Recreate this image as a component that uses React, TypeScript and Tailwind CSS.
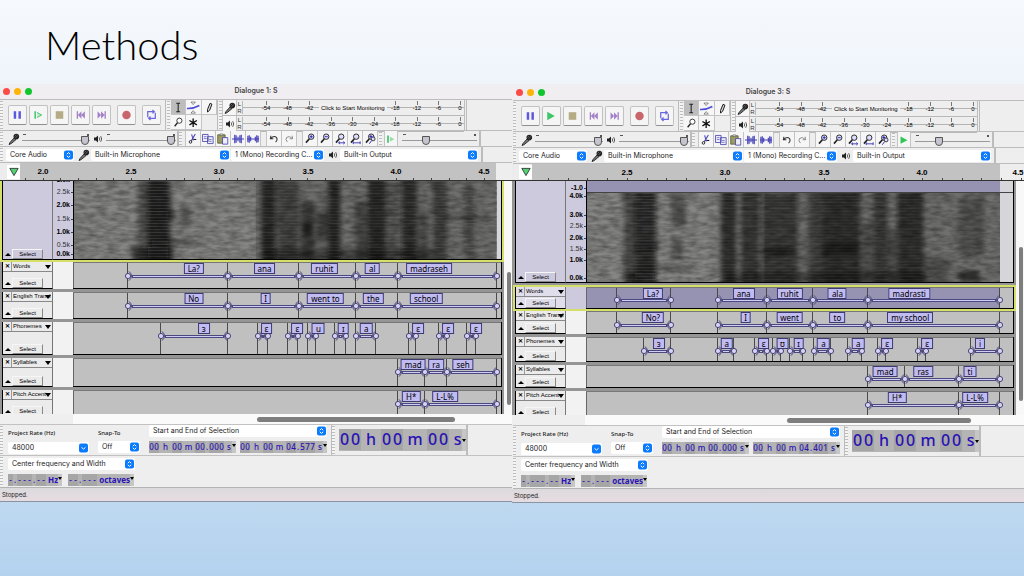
import React from "react";
import clsx from "clsx";

type Label = { from: number; to: number; text: string; at: number };

interface LabelTrack {
  name: string;
  height: string;
  labels: Label[];
  selected?: boolean;
  clipped?: boolean;
}

interface Bar {
  x: number;
  w: number;
  y: number;
  h: number;
  o: number;
}

interface Project {
  id: string;
  title: string;
  second: boolean;
  ruler: { text: string; x: number }[];
  tickStart: number;
  tickStep: number;
  laneStart: number;
  laneWidth: number;
  selectionEnd: string;
  spectroHeight: string;
  scale: { text: string; y: number; bold?: boolean }[];
  bars: Bar[];
  tracks: LabelTrack[];
}

const label = (from: number, to: number, text: string, at: number): Label => ({
  from,
  to,
  text,
  at,
});

const projects: Project[] = [
  {
    id: "d1",
    title: "Dialogue 1: S",
    second: false,
    ruler: [
      { text: "2.0", x: 43 },
      { text: "2.5", x: 131 },
      { text: "3.0", x: 219 },
      { text: "3.5", x: 308 },
      { text: "4.0", x: 396 },
      { text: "4.5", x: 484 },
    ],
    tickStart: 25,
    tickStep: 17.65,
    laneStart: 73,
    laneWidth: 428,
    selectionEnd: "00 h 00 m 04.577 s",
    spectroHeight: "h-[81px]",
    scale: [
      { text: "3.0k", y: -1, bold: true },
      { text: "2.5k", y: 11 },
      { text: "2.0k", y: 24, bold: true },
      { text: "1.5k", y: 38 },
      { text: "1.0k", y: 51, bold: true },
      { text: "0.5k", y: 64 },
      { text: "0.0k", y: 73, bold: true },
    ],
    bars: [
      { x: 64, w: 34, y: 0, h: 80, o: 0.4 },
      { x: 74, w: 21, y: -5, h: 88, o: 0.6 },
      { x: 74, w: 28, y: 30, h: 8, o: 0.5 },
      { x: 58, w: 42, y: 66, h: 16, o: 0.5 },
      { x: 78, w: 44, y: 59, h: 4, o: 0.5 },
      { x: 108, w: 9, y: 24, h: 22, o: 0.35 },
      { x: 188, w: 14, y: -5, h: 90, o: 0.65 },
      { x: 204, w: 22, y: 0, h: 80, o: 0.4 },
      { x: 228, w: 13, y: 20, h: 60, o: 0.45 },
      { x: 229, w: 10, y: 42, h: 12, o: 0.5 },
      { x: 255, w: 12, y: -5, h: 90, o: 0.65 },
      { x: 243, w: 12, y: 30, h: 30, o: 0.4 },
      { x: 282, w: 12, y: 20, h: 60, o: 0.35 },
      { x: 295, w: 17, y: -5, h: 88, o: 0.65 },
      { x: 312, w: 15, y: 0, h: 80, o: 0.25 },
      { x: 329, w: 15, y: -5, h: 88, o: 0.6 },
      { x: 346, w: 9, y: 30, h: 50, o: 0.3 },
      { x: 360, w: 14, y: -5, h: 88, o: 0.45 },
      { x: 374, w: 42, y: 34, h: 5, o: 0.3 },
      { x: 392, w: 10, y: 4, h: 76, o: 0.3 },
      { x: 190, w: 170, y: 68, h: 12, o: 0.35 },
    ],
    tracks: [
      {
        name: "Words",
        height: "h-[30px]",
        labels: [
          label(127, 227, "La?", 193),
          label(227, 299, "ana", 264),
          label(299, 356, "ruhit", 324),
          label(356, 398, "al", 372),
          label(398, 497, "madraseh", 429),
        ],
      },
      {
        name: "English Transl",
        height: "h-[30px]",
        labels: [
          label(127, 227, "No", 193),
          label(227, 299, "I", 265),
          label(299, 356, "went to", 325),
          label(356, 398, "the", 373),
          label(398, 497, "school", 426),
        ],
      },
      {
        name: "Phonemes",
        height: "h-9",
        labels: [
          label(160, 227, "ɜ", 203),
          label(257, 267, "ɛ", 266),
          label(288, 298, "ɛ", 297),
          label(308, 316, "u", 318),
          label(335, 346, "ɪ", 343),
          label(356, 376, "a", 366),
          label(409, 416, "ɛ", 418),
          label(439, 447, "ɛ", 448),
          label(467, 476, "ɛ", 476),
        ],
      },
      {
        name: "Syllables",
        height: "h-8",
        labels: [
          label(398, 425, "mad", 413),
          label(425, 447, "ra", 436),
          label(447, 497, "seh", 463),
        ],
      },
      {
        name: "Pitch Accent",
        height: "h-6",
        clipped: true,
        labels: [label(398, 425, "H*", 411), label(425, 497, "L-L%", 445)],
      },
    ],
  },
  {
    id: "d3",
    title: "Dialogue 3: S",
    second: true,
    ruler: [
      { text: "2.5", x: 115 },
      { text: "3.0", x: 213 },
      { text: "3.5", x: 312 },
      { text: "4.0", x: 410 },
      { text: "4.5", x: 506 },
    ],
    tickStart: 36,
    tickStep: 19.7,
    laneStart: 74,
    laneWidth: 427,
    selectionEnd: "00 h 00 m 04.401 s",
    spectroHeight: "h-[104px]",
    scale: [
      { text: "-1.0", y: 7, bold: true },
      { text: "4.0k", y: 15, bold: true },
      { text: "3.0k", y: 34, bold: true },
      { text: "2.5k", y: 45 },
      { text: "2.0k", y: 57, bold: true },
      { text: "1.5k", y: 68 },
      { text: "1.0k", y: 79, bold: true },
      { text: "0.0k", y: 97, bold: true },
    ],
    bars: [
      { x: 37, w: 32, y: -4, h: 100, o: 0.45 },
      { x: 48, w: 21, y: -4, h: 100, o: 0.45 },
      { x: 50, w: 22, y: 50, h: 8, o: 0.5 },
      { x: 38, w: 30, y: 80, h: 10, o: 0.5 },
      { x: 50, w: 54, y: 74, h: 4, o: 0.35 },
      { x: 84, w: 15, y: 0, h: 34, o: 0.35 },
      { x: 84, w: 12, y: 44, h: 24, o: 0.3 },
      { x: 134, w: 16, y: -4, h: 100, o: 0.65 },
      { x: 154, w: 19, y: -4, h: 100, o: 0.6 },
      { x: 175, w: 36, y: 0, h: 94, o: 0.5 },
      { x: 175, w: 34, y: 54, h: 10, o: 0.4 },
      { x: 222, w: 14, y: -4, h: 100, o: 0.45 },
      { x: 236, w: 38, y: -4, h: 100, o: 0.6 },
      { x: 236, w: 38, y: 50, h: 12, o: 0.4 },
      { x: 276, w: 10, y: 30, h: 60, o: 0.3 },
      { x: 287, w: 14, y: -4, h: 100, o: 0.5 },
      { x: 301, w: 9, y: 36, h: 60, o: 0.3 },
      { x: 311, w: 26, y: -4, h: 100, o: 0.6 },
      { x: 337, w: 26, y: 66, h: 30, o: 0.25 },
      { x: 373, w: 24, y: 4, h: 60, o: 0.25 },
      { x: 373, w: 20, y: 79, h: 10, o: 0.6 },
      { x: 140, w: 200, y: 80, h: 10, o: 0.35 },
    ],
    tracks: [
      {
        name: "Words",
        height: "h-[26px]",
        selected: true,
        labels: [
          label(104, 158, "La?", 140),
          label(205, 254, "ana", 231),
          label(254, 301, "ruhit", 277),
          label(301, 356, "ala", 325),
          label(356, 488, "madrasti", 397),
        ],
      },
      {
        name: "English Transl",
        height: "h-[26px]",
        labels: [
          label(104, 158, "No?", 140),
          label(205, 254, "I", 233),
          label(254, 301, "went", 277),
          label(301, 356, "to", 325),
          label(356, 488, "my school", 398),
        ],
      },
      {
        name: "Phonemes",
        height: "h-7",
        labels: [
          label(131, 158, "ɜ", 146),
          label(205, 221, "a", 214),
          label(242, 254, "ɛ", 251),
          label(260, 268, "ʊ", 270),
          label(277, 291, "ɪ", 286),
          label(302, 319, "a", 311),
          label(336, 350, "a", 346),
          label(366, 374, "ɛ", 375),
          label(406, 414, "ɛ", 415),
          label(459, 488, "i", 468),
        ],
      },
      {
        name: "Syllables",
        height: "h-[26px]",
        labels: [
          label(356, 393, "mad", 373),
          label(393, 447, "ras", 411),
          label(447, 488, "ti", 458),
        ],
      },
      {
        name: "Pitch Accent",
        height: "h-6",
        clipped: true,
        labels: [label(356, 447, "H*", 385), label(447, 488, "L-L%", 463)],
      },
    ],
  },
];

const Grip = () => (
  <div className="my-px w-[3px] shrink-0 self-stretch bg-[repeating-linear-gradient(#bdbdbd_0_1px,#f4f4f4_1px_3px)]" />
);

const MicIcon = () => (
  <svg viewBox="0 0 12 12" className="h-3 w-3 shrink-0">
    <path d="M1 11.5 2 9.5 6.2 4.8 8 6.6 3.2 10.6Z" fill="#777" stroke="#111" strokeWidth=".8" />
    <circle cx="8.3" cy="3.6" r="2.8" fill="#222" />
    <path d="M6.5 3.5 8.3 1.8M7.3 5 9.8 2.6" stroke="#999" strokeWidth=".5" />
  </svg>
);

const SpeakerIcon = () => (
  <svg viewBox="0 0 10 10" className="h-[10px] w-[10px] shrink-0">
    <path d="M1 3.6h1.8L5 1.6v6.8L2.8 6.4H1Z" fill="#222" />
    <path d="M6.2 3.4q1.1 1.6 0 3.2M7.7 2.2q2 2.8 0 5.6" fill="none" stroke="#333" strokeWidth=".8" />
  </svg>
);

const UpDown = ({ single }: { single?: boolean }) => (
  <span className="pointer-events-none absolute top-1/2 right-px flex h-[9px] w-[9px] -translate-y-1/2 items-center justify-center rounded-xs bg-[#0a7bff]">
    <svg viewBox="0 0 9 9" className="h-[9px] w-[9px]" fill="none" stroke="#fff" strokeWidth="1">
      {single ? <path d="M2.5 3.8 4.5 5.6 6.5 3.8" /> : <path d="M2.8 3.7 4.5 2.1 6.2 3.7M2.8 5.3 4.5 6.9 6.2 5.3" />}
    </svg>
  </span>
);

interface PickerProps {
  name: string;
  value: string;
  className: string;
  single?: boolean;
}

const Picker = ({ name, value, className, single }: PickerProps) => (
  <div className={clsx("relative h-3 shrink-0", className)}>
    <select
      aria-label={name}
      className="block h-3 w-full appearance-none truncate rounded-xs bg-white pr-[10px] pl-1 text-[7px] leading-3 text-[#222]"
    >
      <option>{value}</option>
    </select>
    <UpDown single={single} />
  </div>
);

const Slider = ({ name, value, className }: { name: string; value: number; className: string }) => (
  <div className={clsx("relative flex h-full shrink-0 items-center", className)}>
    <span className="absolute top-[3px] left-px h-px w-[3px] bg-[#555]" />
    <span className="absolute top-[3px] right-px h-[2px] w-[2px] bg-[#555]" />
    <input
      type="range"
      aria-label={name}
      defaultValue={value}
      className="mt-[3px] h-[9px] w-full appearance-none bg-[linear-gradient(#9a9a9a,#9a9a9a)] bg-[length:100%_1px] bg-center bg-no-repeat [&::-webkit-slider-thumb]:h-[9px] [&::-webkit-slider-thumb]:w-2 [&::-webkit-slider-thumb]:appearance-none [&::-webkit-slider-thumb]:rounded-t-xs [&::-webkit-slider-thumb]:rounded-b-full [&::-webkit-slider-thumb]:border [&::-webkit-slider-thumb]:border-[#555] [&::-webkit-slider-thumb]:bg-[#c5c5d0]"
    />
  </div>
);

const transport = [
  { name: "Pause", icon: <path d="M5 5h2.6v8H5zM10 5h2.6v8H10z" fill="#5a57e0" /> },
  { name: "Play", icon: <path d="M4.5 4.5 12.5 9l-8 4.5Z" fill="#3fc668" /> },
  { name: "Stop", icon: <path d="M5 5h8v8H5z" fill="#b5ab84" /> },
  {
    name: "Skip to Start",
    icon: <path d="M5 5h1.4v8H5zM10 5v8L6.2 9ZM13.6 5v8L9.8 9Z" fill="#a482c8" />,
  },
  {
    name: "Skip to End",
    icon: <path d="M12.2 5h1.4v8h-1.4zM4.8 5v8L8.6 9ZM8.5 5v8l3.8-4Z" fill="#a482c8" />,
  },
];

const TransportButton = ({ name, children }: { name: string; children: React.ReactNode }) => (
  <button
    aria-label={name}
    className="flex h-5 w-[19px] items-center justify-center rounded-xs border border-[#c2c2c2] border-b-[#8f8f8f] bg-[#f5f5f5]"
  >
    <svg viewBox="0 0 18 18" className="h-[18px] w-[18px]">
      {children}
    </svg>
  </button>
);

const tools = [
  { name: "Selection", icon: <path d="M5.5 3h4M5.5 12h4M7.5 3v9" stroke="#222" strokeWidth="1.1" /> },
  {
    name: "Envelope",
    icon: (
      <>
        <path d="M5.2 1.8h4.6L7.5 4.4ZM5.2 13.4h4.6L7.5 10.8Z" fill="#fff" stroke="#555" strokeWidth=".7" />
        <path d="M1 8.5Q8 8.8 14 5.4" stroke="#4d4fd8" strokeWidth="1.6" fill="none" />
      </>
    ),
  },
  {
    name: "Draw",
    icon: <path d="M5.8 9.5 8.4 3.2 10.4 4 8 10.4 5.8 12.2Z" fill="#ddd" stroke="#111" strokeWidth="1" />,
  },
  {
    name: "Zoom",
    icon: (
      <>
        <circle cx="8.8" cy="5.6" r="2.7" fill="#fff" stroke="#222" strokeWidth=".9" />
        <path d="M6.8 7.8 3.8 11.4" stroke="#222" strokeWidth="1.4" />
      </>
    ),
  },
  {
    name: "Multi",
    icon: <path d="M7.5 3.2v9M3.6 5.4l7.8 4.6M3.6 10l7.8-4.6" stroke="#111" strokeWidth="1.4" />,
  },
];

const lens = (
  <>
    <circle cx="8.8" cy="5" r="2.9" fill="#dcdcff" stroke="#222" strokeWidth="1" />
    <path d="M6.8 7.2 3.2 11.4" stroke="#222" strokeWidth="1.7" />
  </>
);

const editGroups = [
  [
    {
      name: "Cut",
      icon: (
        <>
          <path d="M6 2.6 8 9M10 2.2 5.6 9.5" stroke="#4440b8" strokeWidth="1.1" />
          <circle cx="4.8" cy="10.6" r="1.4" fill="none" stroke="#222" />
          <path d="M8 8h3" stroke="#222" strokeWidth="1.2" />
        </>
      ),
    },
    {
      name: "Copy",
      icon: (
        <>
          <path d="M1.6 2.6h6v7.6h-6zM7 5h6v7.4H7z" fill="#eeeeff" stroke="#4a48a8" strokeWidth=".9" />
          <path d="M3 5h3M3 7h3M8.4 8h3M8.4 10h3" stroke="#4a48a8" strokeWidth=".7" />
        </>
      ),
    },
    {
      name: "Paste",
      icon: (
        <>
          <path d="M1.8 3h8v9h-8z" fill="#9a9a62" stroke="#55552c" strokeWidth=".8" />
          <path d="M4.3 2h3v1.8h-3z" fill="#ddd" stroke="#444" strokeWidth=".5" />
          <path d="M7 6h5.6v7H7z" fill="#eeeeff" stroke="#4a48a8" strokeWidth=".9" />
        </>
      ),
    },
    {
      name: "Trim",
      icon: <path d="M1 7.5h13M4 3v9M5.5 3.6v7.8M7.5 5v5M9.5 3.6v7.8M11 3v9" stroke="#4440b8" strokeWidth="1.2" />,
    },
    {
      name: "Silence",
      icon: (
        <path d="M1 7.5h13M2 4v7M3.5 3.6v8M5 5v5M10 5v5M11.5 3.6v8M13 4v7" stroke="#4440b8" strokeWidth="1.2" />
      ),
    },
  ],
  [
    {
      name: "Undo",
      icon: (
        <path d="M4.2 4 3.6 7.2 6.8 7.2M3.8 7Q7.4 3.4 10 5.8q1.9 2.4-.8 5" fill="none" stroke="#333" strokeWidth="1.1" />
      ),
    },
    {
      name: "Redo",
      icon: (
        <path d="M10.8 4 11.4 7.2 8.2 7.2M11.2 7Q7.6 3.4 5 5.8q-1.9 2.4.8 5" fill="none" stroke="#888" strokeWidth="1" />
      ),
    },
  ],
  [
    {
      name: "Zoom In",
      icon: (
        <>
          {lens}
          <path d="M8.8 3.4v3.2M7.2 5h3.2" stroke="#2b27b0" strokeWidth="1" />
        </>
      ),
    },
    {
      name: "Zoom Out",
      icon: (
        <>
          {lens}
          <path d="M7.2 5h3.2" stroke="#2b27b0" strokeWidth="1" />
        </>
      ),
    },
    {
      name: "Fit Selection",
      icon: (
        <>
          {lens}
          <path d="M6 11.6h6.6M7.6 10.2 6 11.6 7.6 13M11 10.2l1.6 1.4L11 13" stroke="#2b27b0" strokeWidth=".9" fill="none" />
        </>
      ),
    },
    {
      name: "Fit Project",
      icon: (
        <>
          {lens}
          <path d="M5.6 11.6h7.4M5.6 10v3M13 10v3" stroke="#2b27b0" strokeWidth=".9" />
        </>
      ),
    },
    {
      name: "Zoom Toggle",
      icon: (
        <>
          {lens}
          <circle cx="10.8" cy="7.4" r="2.1" fill="#dcdcff" stroke="#222" strokeWidth=".9" />
          <path d="M9.2 9.2 6.8 12.6M8.4 3.2v3.2M6.8 4.8h3.2" stroke="#2b27b0" strokeWidth="1" />
        </>
      ),
    },
  ],
];

const meterMarks = ["-54", "-48", "-42", "-36", "-30", "-24", "-18", "-12", "-6", "0"];

const Meter = ({ kind }: { kind: "record" | "play" }) => (
  <div className="flex h-4 border-b border-[#b9b9b9]">
    <button
      aria-label={kind === "record" ? "Record Meter" : "Playback Meter"}
      className="flex w-[15px] items-center justify-center border-x border-[#c4c4c4] bg-[#f6f6f6]"
    >
      {kind === "record" ? <MicIcon /> : <SpeakerIcon />}
    </button>
    <div className="flex w-[5px] flex-col items-center justify-center text-[6px] leading-[7px] text-[#333]">
      <span>L</span>
      <span>R</span>
    </div>
    <div className="relative my-px flex w-[222px] items-center justify-between border-l border-[#b9b9b9] bg-[linear-gradient(#b4b4b4,#b4b4b4)] bg-[length:100%_1px] bg-center bg-no-repeat pl-[19px] text-[6px] leading-[14px] text-black">
      {meterMarks.map((mark, i) => (
        <span key={mark} className="relative flex w-2 justify-center">
          <span className="absolute top-0 left-1/2 h-[4px] w-px bg-[#777]" />
          {kind === "record" && i > 2 && i < 6 ? "" : mark}
        </span>
      ))}
      {kind === "record" && (
        <button className="absolute inset-y-0 left-[76px] my-[2px] bg-[#f0f0f0] px-[2px] leading-[10px] whitespace-nowrap">
          Click to Start Monitoring
        </button>
      )}
    </div>
  </div>
);

const Toolbars = ({ project }: { project: Project }) => (
  <div className={clsx("bg-[#eeeeee] font-['Liberation_Sans',sans-serif]", project.second && "pl-px")}>
    <div className="flex h-8 border-t border-b border-[#bcbcbc]">
      <Grip />
      <div className="ml-[5px] flex items-center gap-[2px]">
        {transport.map(({ name, icon }) => (
          <TransportButton key={name} name={name}>
            {name === "Play" && !project.second ? (
              <>
                <path d="M5.5 5v8" stroke="#3fc668" strokeWidth="1.6" />
                <path d="M7.5 6.4 12.4 9l-4.9 2.6" fill="#bfeacb" stroke="#3fc668" />
              </>
            ) : (
              icon
            )}
          </TransportButton>
        ))}
        <div className="ml-1 flex gap-[6px]">
          <TransportButton name="Record">
            <circle cx="9" cy="9" r="4.5" fill="#c9666c" />
          </TransportButton>
          <TransportButton name="Loop">
            <path
              d="M5 11.5v-6h6.5M13 6.5v6H6.5M10 3.6l2 1.9-2 1.8M8 10.6l-2 1.9 2 1.8"
              fill="none"
              stroke="#6a67e0"
              strokeWidth="1.3"
            />
          </TransportButton>
        </div>
      </div>
      <div className="mr-px ml-1 w-px bg-[#bcbcbc]" />
      <Grip />
      <div className="ml-px grid w-[46px] grid-cols-3 grid-rows-2">
        {tools.map(({ name, icon }, i) => (
          <button
            key={name}
            aria-label={name}
            className={clsx(
              "flex items-center justify-center border-r border-b border-[#c4c4c4]",
              i === 0 ? "bg-[#bdbdbd]" : "bg-[#f6f6f6]"
            )}
          >
            <svg viewBox="0 0 15 15" className="h-[15px] w-[15px]">
              {icon}
            </svg>
          </button>
        ))}
      </div>
      <div className="mr-px w-px bg-[#bcbcbc]" />
      <Grip />
      <div>
        <Meter kind="record" />
        <Meter kind="play" />
      </div>
      <div className="w-[3px] border-x border-[#bcbcbc]" />
    </div>

    <div className="flex h-4 items-center border-b border-[#bcbcbc]">
      <Grip />
      <div className="ml-[5px] flex h-full items-center">
        <MicIcon />
      </div>
      <Slider name="Recording Volume" value={99} className="ml-[2px] w-[68px]" />
      <div className="ml-[3px] flex h-full items-center">
        <SpeakerIcon />
      </div>
      <Slider name="Playback Volume" value={99} className="ml-[3px] w-[70px]" />
      <div className="ml-px w-[2px] self-stretch border-x border-[#bcbcbc]" />
      <Grip />
      <div className="ml-[3px] flex gap-[5px]">
        {editGroups.map((group, i) => (
          <div key={i} className="flex border-l border-[#c4c4c4]">
            {group.map(({ name, icon }) => (
              <button
                key={name}
                aria-label={name}
                className="flex h-[15px] w-[15px] items-center justify-center border-r border-[#c4c4c4] bg-[#f6f6f6]"
              >
                <svg viewBox="0 0 15 15" className="h-[14px] w-[14px]">
                  {icon}
                </svg>
              </button>
            ))}
          </div>
        ))}
      </div>
      <div className="ml-px flex h-full items-center gap-[2px]">
        <Grip />
        <button
          aria-label="Play at Speed"
          className="flex h-[15px] w-[14px] items-center justify-center border-x border-[#c4c4c4] bg-[#f6f6f6]"
        >
          <svg viewBox="0 0 14 14" className="h-[14px] w-[14px]">
            {project.second ? (
              <path d="M3 3 11 7.2 3 11.4Z" fill="#2fc656" />
            ) : (
              <>
                <path d="M3.5 3v8.4" stroke="#3fc668" strokeWidth="2" />
                <path d="M6 4.4 10.8 7.2 6 10Z" fill="#8fdca5" />
              </>
            )}
          </svg>
        </button>
      </div>
      <Slider name="Playback Speed" value={30} className="ml-1 w-[75px]" />
      <div className="ml-[2px] w-[2px] self-stretch border-x border-[#bcbcbc]" />
    </div>

    <div className="flex h-4 items-center border-b border-[#bcbcbc] font-['Inter',sans-serif]">
      <Grip />
      <Picker name="Audio Host" value="Core Audio" className="ml-[3px] w-[68px]" />
      <div className="ml-1">
        <MicIcon />
      </div>
      <Picker name="Recording Device" value="Built-in Microphone" className="ml-px w-[139px]" />
      <Picker name="Recording Channels" value="1 (Mono) Recording C..." className="ml-px w-[93px]" />
      <div className="ml-1">
        <SpeakerIcon />
      </div>
      <Picker name="Playback Device" value="Built-in Output" className="ml-[2px] w-[138px]" />
      <div className="ml-[3px] w-[2px] self-stretch border-x border-[#bcbcbc]" />
    </div>
  </div>
);

const Ruler = ({ project }: { project: Project }) => (
  <div className="relative flex flex-1 overflow-hidden border-b border-[#333] bg-[#c2c2c2] font-['Liberation_Sans',sans-serif]">
    <div className="flex w-5 shrink-0 items-center bg-[#ececec]">
      <button
        aria-label="Pinned Play Head"
        className="ml-[7px] flex h-[14px] w-[13px] items-center justify-center bg-white"
      >
        <svg viewBox="0 0 12 12" className="h-3 w-3">
          <path d="M1.8 2.4h8.4L6 9.6Z" fill="#52d273" stroke="#222" strokeWidth=".8" />
        </svg>
      </button>
    </div>
    {project.ruler.map(({ text, x }) => (
      <span
        key={text}
        className="absolute top-1 z-10 w-5 -translate-x-1/2 text-center text-[8px] leading-[9px] font-bold text-black"
        style={{ left: `${(x / 512) * 100}%` }}
      >
        {text}
      </span>
    ))}
    <div className={clsx("absolute inset-y-0 right-0 bg-[#eeeeee]", project.second ? "w-6" : "w-4")} />
    {Array.from({ length: 27 }, (_, i) => (
      <span
        key={i}
        className="absolute bottom-0 h-[2px] w-px bg-[#444]"
        style={{ left: `${((project.tickStart + i * project.tickStep) / 512) * 100}%` }}
      />
    ))}
  </div>
);

const Spectrogram = ({ id, bars, width, height }: { id: string; bars: Bar[]; width: number; height: number }) => (
  <svg
    viewBox={`0 0 ${width} ${height}`}
    preserveAspectRatio="none"
    className="block h-full w-full"
    role="img"
    aria-label="Spectrogram"
  >
    <defs>
      <filter id={`${id}-soft`} x="-20%" y="-20%" width="140%" height="140%">
        <feGaussianBlur stdDeviation="2.6 2" />
      </filter>
      <filter id={`${id}-noise`} x="0" y="0" width="100%" height="100%">
        <feTurbulence type="fractalNoise" baseFrequency="0.09 0.28" numOctaves="2" seed="4" />
        <feColorMatrix values="0 0 0 0 0  0 0 0 0 0  0 0 0 0 0  1.6 0 0 0 -0.45" />
        <feGaussianBlur stdDeviation="0.5 0.3" />
      </filter>
      <pattern id={`${id}-lines`} width="8" height="3" patternUnits="userSpaceOnUse">
        <rect width="8" height="1" fill="#aaa" opacity=".1" />
      </pattern>
    </defs>
    <rect width={width} height={height} fill="#868684" />
    <rect x={width * 0.43} width={width * 0.57} height={height} fill="#000" opacity=".16" />
    <g filter={`url(#${id}-soft)`}>
      {bars.map((bar, i) => (
        <rect key={i} x={bar.x} y={bar.y} width={bar.w} height={bar.h} fill="#080808" opacity={bar.o} />
      ))}
    </g>
    {bars
      .filter((bar) => bar.h > 70)
      .map((bar, i) => (
        <rect key={i} x={bar.x} y="0" width={bar.w} height={height} fill={`url(#${id}-lines)`} />
      ))}
    <rect width={width} height={height} filter={`url(#${id}-noise)`} opacity=".36" />
  </svg>
);

const Handle = ({ start, end }: { start: boolean; end: boolean }) => (
  <svg viewBox="0 0 12 12" className="h-3 w-3" fill="none" stroke="#3b3866" strokeWidth=".9">
    {start && <path d="M7 1.4Q12 6 7 10.6" fill="#c9c6ec" />}
    {end && <path d="M5 1.4Q0 6 5 10.6" fill="#c9c6ec" />}
    <circle cx="6" cy="6" r="2.6" fill="#d5d2f5" />
  </svg>
);

const Lane = ({ project, track }: { project: Project; track: LabelTrack }) => {
  const pos = (x: number) => `${((x - project.laneStart) / project.laneWidth) * 100}%`;
  const edges = [...new Set(track.labels.flatMap((l) => [l.from, l.to]))];

  return (
    <div className="relative flex-1 overflow-hidden border-l border-[#666] bg-[#c0c0c0] font-['Noto_Sans','DejaVu_Sans',sans-serif]">
      {track.selected && <div className="absolute inset-y-0 left-0 w-[97%] bg-[#9592b2]" />}
      {edges.map((x) => (
        <span
          key={x}
          className="absolute inset-y-0 w-px -translate-x-px bg-[#4a4a4a]"
          style={{ left: pos(x) }}
        />
      ))}
      {track.labels.map((l) => (
        <span
          key={l.from}
          className={clsx(
            "absolute h-[3px] border border-[#4b4880] bg-[#d0cdf4]",
            track.selected ? "top-[11px]" : "top-3"
          )}
          style={{ left: `calc(${pos(l.from)} + 4px)`, right: `calc(100% - ${pos(l.to)} + 4px)` }}
        />
      ))}
      {edges.map((x) => (
        <span
          key={x}
          className={clsx("absolute -translate-x-1/2", track.selected ? "top-[6px]" : "top-[7px]")}
          style={{ left: pos(x) }}
        >
          <Handle start={track.labels.some((l) => l.from === x)} end={track.labels.some((l) => l.to === x)} />
        </span>
      ))}
      {track.labels.map((l) => (
        <span
          key={l.at}
          className="absolute top-0 flex h-[11px] -translate-x-1/2 items-center border border-[#3d3a70] bg-[#c0bbf0] px-[3px] text-[8px] leading-[9px] whitespace-nowrap text-black"
          style={{ left: pos(l.at) }}
        >
          {l.text}
        </span>
      ))}
    </div>
  );
};

const SelectButton = () => (
  <div className="flex h-[10px] shrink-0 items-stretch">
    <button aria-label="Collapse" className="flex w-[9px] items-center justify-center">
      <span className="border-x-[3px] border-b-[3px] border-x-transparent border-b-black" />
    </button>
    <button className="mr-[9px] flex-1 border border-[#f6f6f6] border-r-[#888] border-b-[#888] text-[6px] leading-[8px]">
      Select
    </button>
  </div>
);

const TrackRow = ({ project, track }: { project: Project; track: LabelTrack }) => (
  <div
    className={clsx(
      "overflow-hidden",
      track.height,
      track.selected ? "border-2 border-[#d5e06a]" : "border-x-2 border-[#959595]",
      !track.selected && !track.clipped && "border-b-[3px]"
    )}
  >
    <div className={clsx("flex", track.clipped ? "h-[27px]" : "h-full")}>
      <div
        className={clsx(
          "flex w-[51px] shrink-0 flex-col justify-between border-x border-b border-b-black border-l-black border-r-[#777]",
          track.selected ? "bg-[#e0deea]" : "bg-[#ebebeb]"
        )}
      >
        <div className="flex h-[10px] items-center border-b border-[#888] text-[6px] leading-[9px]">
          <button aria-label={`Close ${track.name}`} className="w-[9px] shrink-0 border-r border-[#999] font-bold">
            ✕
          </button>
          <button className="relative flex flex-1 items-center pl-px whitespace-nowrap">
            {track.name}
            <span className="absolute right-px border-x-[3px] border-t-[4px] border-x-transparent border-t-black" />
          </button>
        </div>
        <SelectButton />
      </div>
      <div className={clsx("w-5 shrink-0", track.selected ? "bg-[#cdcade]" : "bg-[#f2f2f2]")} />
      <div className="flex min-w-0 flex-1 border-t border-b border-t-[#777] border-b-black">
        <Lane project={project} track={track} />
      </div>
      <div className="w-px bg-black" />
    </div>
  </div>
);

const AudioTrack = ({ project }: { project: Project }) => (
  <div
    className={clsx(
      "flex border-x-2 border-b-2",
      project.spectroHeight,
      project.second ? "border-[#959595]" : "border-[#d5e06a]"
    )}
  >
    <div className="flex w-[51px] shrink-0 flex-col justify-end border-x border-b border-b-black border-l-black border-r-[#777] bg-[#cdcade]">
      <SelectButton />
    </div>
    <div className="relative w-5 shrink-0 overflow-hidden border-b border-black bg-[#cdcade]">
      {project.scale.map(({ text, y, bold }) => (
        <span
          key={text}
          className={clsx(
            "absolute right-[3px] -translate-y-1/2 text-[7px] leading-[8px]",
            bold ? "font-bold text-black" : "text-[#333]"
          )}
          style={{ top: y }}
        >
          {text}
        </span>
      ))}
      {project.scale.map(({ text, y }) => (
        <span key={text} className="absolute right-0 h-px w-[2px] bg-[#444]" style={{ top: y }} />
      ))}
    </div>
    <div className="flex min-w-0 flex-1 flex-col border-b border-l border-black bg-[#d6d6da]">
      {project.second && (
        <div className="h-3 shrink-0 border-b border-[#444]">
          <div className="h-full w-[97%] bg-[#9592b2]" />
        </div>
      )}
      <div className={clsx("min-h-0 flex-1", project.second ? "w-[97%]" : "w-[99%]")}>
        <Spectrogram
          id={project.id}
          bars={project.bars}
          width={project.second ? 414 : 424}
          height={project.second ? 90 : 78}
        />
      </div>
    </div>
    <div className="w-px bg-black" />
  </div>
);

interface TimeBoxProps {
  value: string;
  big?: boolean;
}

const TimeBox = ({ value, big }: TimeBoxProps) => {
  const parts = value.match(/[\d-]|[^\d-]+/g) ?? [];
  return (
    <div
      className={clsx(
        "flex shrink-0 bg-[#b4b4b4] font-['Noto_Sans',sans-serif] font-medium whitespace-pre text-[#2a12b4]",
        big ? "h-[22px] text-[16px] leading-[21px]" : "h-3 text-[8px] leading-3"
      )}
    >
      <div>
        {parts.map((part, i) => (
          <span
            key={i}
            className={clsx(
              "inline-block text-center",
              /[\d-]/.test(part) && "bg-[#a6a6a6]",
              /[\d-]/.test(part) && (big ? "w-[11px]" : "w-[5px]"),
              part === " h " && (big ? "w-5" : "w-[13px]"),
              part === " m " && (big ? "w-6" : "w-[13px]"),
              part === " s" && (big ? "w-[13px]" : "w-2"),
              /[zo]/.test(part) && "font-bold",
              /^[.,]$/.test(part) && "w-1"
            )}
          >
            {part}
          </span>
        ))}
      </div>
      <button aria-label="Time format" className={clsx("flex w-1 bg-[#c6c6c6]", big ? "items-center" : "pt-[3px]")}>
        <span className="border-x-2 border-t-[3px] border-x-transparent border-t-black" />
      </button>
    </div>
  );
};

const SelectionBars = ({ project }: { project: Project }) => (
  <div className={clsx("bg-[#eeeeee] font-['Inter',sans-serif]", project.second && "pl-px")}>
    <div className="flex h-8 border-t border-b border-[#c2c2c2]">
      <Grip />
      <div className="ml-[5px] flex w-20 flex-col justify-between pt-1 pb-px">
        <span className="font-['Noto_Sans',sans-serif] text-[6px] leading-2 font-medium text-[#222]">
          Project Rate (Hz)
        </span>
        <Picker name="Project Rate (Hz)" value="48000" className="w-[81px]" single />
      </div>
      <div className="ml-[10px] flex w-[42px] flex-col justify-between pt-1 pb-[2px]">
        <span className="font-['Noto_Sans',sans-serif] text-[6px] leading-2 font-medium text-[#222]">Snap-To</span>
        <Picker name="Snap-To" value="Off" className="w-[42px]" />
      </div>
      <div className="ml-[9px] flex w-[178px] flex-col justify-between pb-[2px]">
        <Picker name="Selection Mode" value="Start and End of Selection" className="w-[178px]" />
        <div className="flex justify-between">
          <TimeBox value="00 h 00 m 00.000 s" />
          <TimeBox value={project.selectionEnd} />
        </div>
      </div>
      <div className="ml-1 w-px bg-[#bcbcbc]" />
      <Grip />
      <div className="ml-1 flex items-center">
        <TimeBox value="00 h 00 m 00 s" big />
      </div>
      <div className="w-[2px] border-x border-[#bcbcbc]" />
    </div>
    <div className="flex h-8 border-b border-[#b4b4b4]">
      <Grip />
      <div className="ml-[5px] flex flex-col justify-between pt-[2px] pb-px">
        <Picker name="Spectral Selection" value="Center frequency and Width" className="w-[127px]" />
        <div className="flex gap-[6px]">
          <TimeBox value="-.---.-- Hz" />
          <TimeBox value="--.--- octaves" />
        </div>
      </div>
    </div>
  </div>
);

const AudioWindow = ({ project }: { project: Project }) => (
  <section className="min-w-0 flex-1 text-black">
    <div className="flex h-[97px] flex-col">
      <div
        className={clsx(
          "relative flex shrink-0 items-center gap-1 bg-[#f1eef2]",
          project.second ? "h-4 pl-1" : "h-[15px] pl-[3px]"
        )}
      >
        <button aria-label="Close" className="h-[7px] w-[7px] rounded-full bg-[#fb4b46]" />
        <button aria-label="Minimize" className="h-[7px] w-[7px] rounded-full bg-[#fdb408]" />
        <button aria-label="Zoom" className="h-[7px] w-[7px] rounded-full bg-[#11c62c]" />
        <h2 className="absolute inset-x-0 text-center font-['Inter',sans-serif] text-[7px] font-semibold text-[#444]">
          {project.title}
        </h2>
      </div>
      <Toolbars project={project} />
      <Ruler project={project} />
    </div>

    <div className="flex font-['Liberation_Sans',sans-serif]">
      <div className={clsx("min-w-0 flex-1 bg-[#959595]", project.second && "pl-px")}>
        <AudioTrack project={project} />
        {project.tracks.map((track) => (
          <TrackRow key={track.name} project={project} track={track} />
        ))}
      </div>
      <div className="flex w-2 flex-col bg-[#f8f8f8]">
        <div className={project.second ? "h-[28%]" : "h-[39%]"} />
        <div className={clsx("ml-[3px] w-1 rounded-full bg-[#7e7e7e]", project.second ? "h-[66%]" : "h-[57%]")} />
      </div>
    </div>

    <div className="flex h-[10px] bg-[#efefef]">
      <div className="ml-[73px] flex flex-1 items-center bg-[#fafafa]">
        <div className={project.second ? "w-[46%]" : "w-[42%]"} />
        <div className={clsx("h-[5px] rounded-full bg-[#7e7e7e]", project.second ? "w-[42%]" : "w-[45%]")} />
      </div>
    </div>
    <SelectionBars project={project} />
    <div className="h-[14px] border-b border-[#8b93a3] bg-linear-to-b from-[#dcdadd] to-[#e6dce2] pl-[2px] font-['Inter',sans-serif] text-[6px] leading-[14px] text-[#222]">
      Stopped.
    </div>
  </section>
);

const App = () => {
  return (
    <main className="min-h-screen bg-linear-to-b from-[#f6f9fd] via-[#dceaf6] to-[#b4d2ee]">
      <header className="flex h-[84px] items-center pt-[6px] pl-[45px]">
        <h1 className="font-['Lato',sans-serif] text-[40px] leading-none font-light text-black">Methods</h1>
      </header>
      <div className="flex">
        {projects.map((project) => (
          <AudioWindow key={project.id} project={project} />
        ))}
      </div>
    </main>
  );
};

export default App;
